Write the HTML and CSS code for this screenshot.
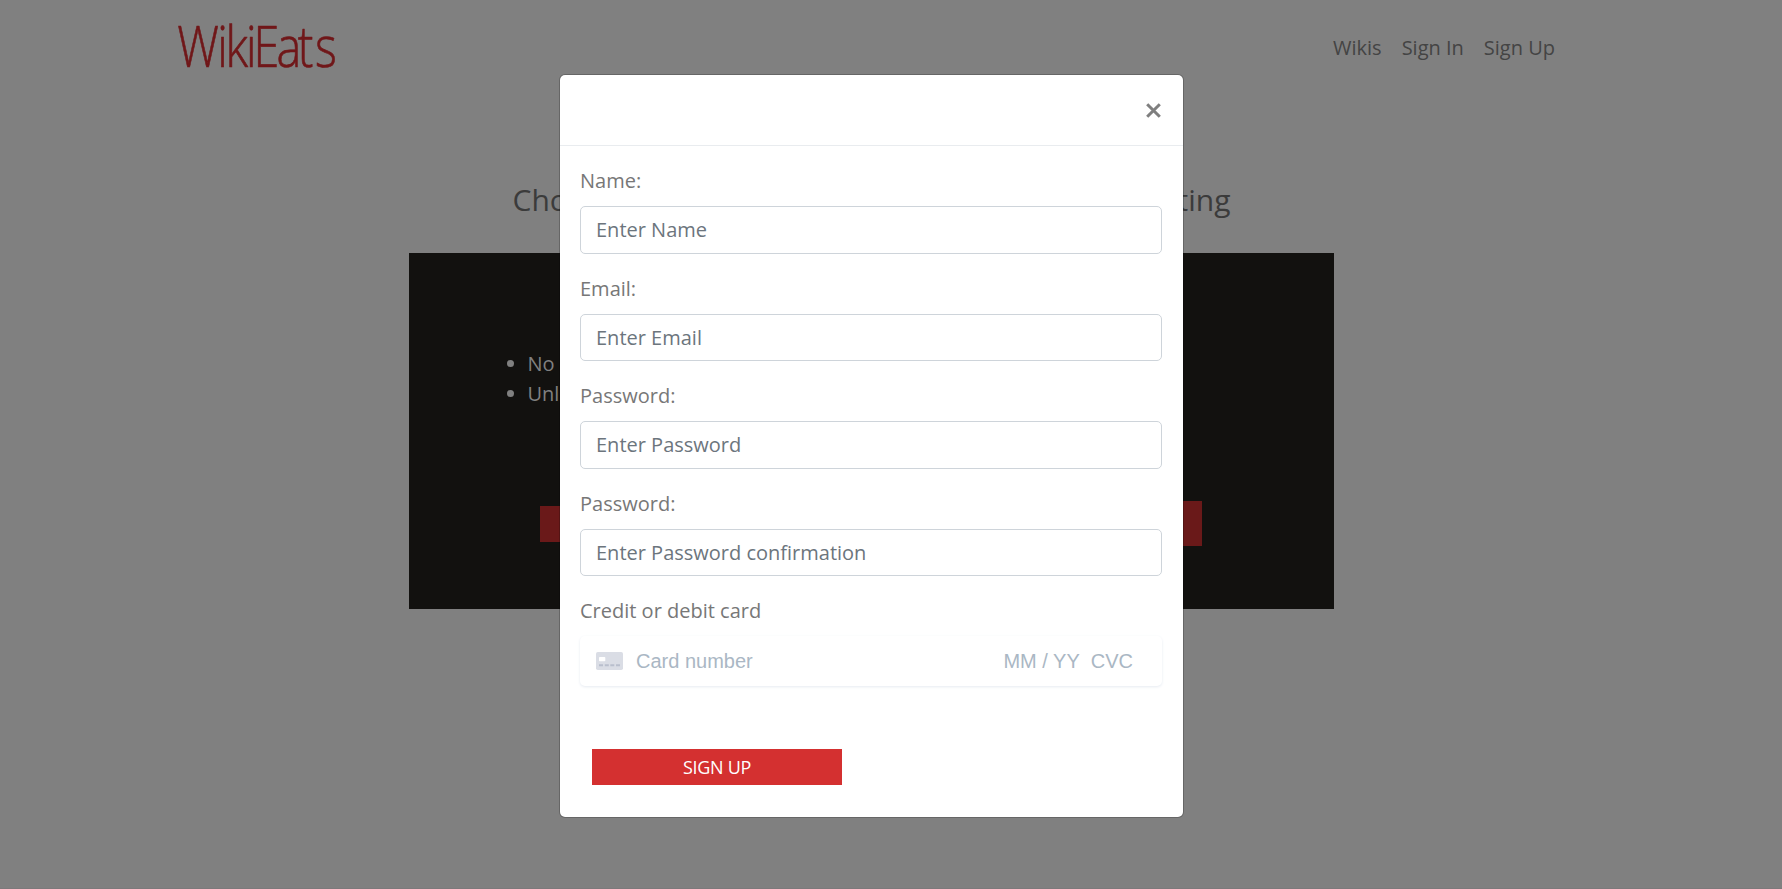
FILE: index.html
```
<!DOCTYPE html>
<html lang="en">
<head>
<meta charset="utf-8">
<title>WikiEats</title>
<link rel="stylesheet" href="styles.css">
</head>
<body>
<div class="page">
  <header class="navbar">
    <svg class="logo" width="170" height="80" viewBox="0 -14 170 80" role="img" aria-label="WikiEats">
      <text class="logo-text" transform="scale(.82 1)" x="-1 48 58 83 92 120 146 167" y="47">WikiEats</text>
    </svg>
    <nav class="nav">
      <a class="nav-link">Wikis</a>
      <a class="nav-link">Sign In</a>
      <a class="nav-link">Sign Up</a>
    </nav>
  </header>
  <h2 class="headline"><span>Cho</span><span>ting</span></h2>
  <section class="plans">
    <ul class="features">
      <li>No</li>
      <li>Unl</li>
    </ul>
    <div class="plan-actions">
      <div class="plan-button"></div>
      <div class="plan-button plan-button-tall"></div>
    </div>
  </section>
</div>
<div class="backdrop">
  <div class="modal">
    <div class="modal-header">
      <svg class="close" width="15" height="15" viewBox="0 0 15 15"><path d="M1.2 1.2 13.8 13.8M13.8 1.2 1.2 13.8"/></svg>
    </div>
    <form class="modal-body">
      <div class="group"><label class="label">Name:</label><div class="field">Enter Name</div></div>
      <div class="group"><label class="label">Email:</label><div class="field">Enter Email</div></div>
      <div class="group"><label class="label">Password:</label><div class="field">Enter Password</div></div>
      <div class="group"><label class="label">Password:</label><div class="field">Enter Password confirmation</div></div>
      <label class="label">Credit or debit card</label>
      <div class="card">
        <svg class="card-icon" width="27" height="18" viewBox="0 0 27 18">
          <rect width="27" height="18" rx="1.8" fill="#dadde5"/>
          <rect x="3" y="5" width="6.3" height="4.3" rx=".8" fill="#fff"/>
          <path d="M3 13.2h4M8.8 13.2h4M14.3 13.2h4M20 13.2h4" stroke="#b9bfcd" stroke-width="1.9"/>
        </svg>
        <span class="card-number">Card number</span>
        <span class="card-expiry">MM / YY</span>
        <span>CVC</span>
      </div>
      <div class="submit">SIGN UP</div>
    </form>
  </div>
</div>
</body>
</html>
```
FILE: styles.css
```
* { box-sizing: border-box; }
body {
  margin: 0;
  height: 889px;
  overflow: hidden;
  background: #808080;
  font: 20px/30px "Open Sans", sans-serif;
  color: #3b3b3b;
}
.page { width: 1743px; }
.navbar {
  display: flex;
  justify-content: space-between;
  align-items: flex-start;
  height: 180px;
  padding: 6px 188px 0 178px;
}
.logo { display: block; overflow: visible; }
.logo-text {
  font: 300 57px "Open Sans", sans-serif;
  fill: #701719;
  stroke: #701719;
  stroke-width: .7;
  stroke-linejoin: round;
}
.nav { display: flex; gap: 20px; padding-top: 27px; }
.nav-link { color: #444; }
.headline {
  display: flex;
  justify-content: space-between;
  width: 718px;
  margin: 0 auto;
  font-size: 30px;
  font-weight: 400;
  line-height: 40px;
}
.plans {
  width: 925px;
  height: 356px;
  margin: 33px auto 0;
  padding-top: 96px;
  background: #12110f;
}
.features { margin: 0; padding-left: 118.5px; color: #808080; height: 152px; }
.plan-actions {
  display: flex;
  justify-content: space-between;
  align-items: center;
  height: 45px;
  padding: 0 132px 0 131px;
}
.plan-button { width: 250px; height: 36px; background: #6a1919; }
.plan-button-tall { height: 45px; }
.backdrop {
  position: absolute;
  inset: 0;
  padding: 74px 0 0 559px;
  border-bottom: 1px solid #7d797b;
}
.modal {
  width: 625px;
  height: 744px;
  border: 1px solid rgba(0, 0, 0, .2);
  border-radius: 6px;
  background: #fff;
  background-clip: padding-box;
  color: #777;
}
.modal-header {
  display: flex;
  justify-content: flex-end;
  height: 71px;
  padding: 28px 22px 0 0;
  border-bottom: 1px solid #e9ecef;
}
.close { fill: none; stroke: #7f7f7f; stroke-width: 3; }
.modal-body { padding: 20px 21px 20px 20px; }
.group { height: 107.5px; }
.label { display: block; margin-bottom: 10px; }
.field {
  height: 47.5px;
  padding: 8px 15px;
  border: 1px solid #ced4da;
  border-radius: 5px;
  color: #6c757d;
}
.card {
  display: flex;
  align-items: center;
  height: 50px;
  padding: 0 29px 0 16px;
  border-radius: 5px;
  box-shadow: 0 1px 3px #e6ebf1;
  font: 20px/24px "Liberation Sans", Arial, sans-serif;
  color: #aab7c4;
}
.card-number { flex: 1; padding-left: 13px; }
.card-expiry { margin-right: 11px; }
.submit {
  width: 250px;
  height: 36px;
  margin: 63px 0 0 12px;
  background: #d43030;
  color: #fff;
  font-size: 18px;
  font-weight: 500;
  letter-spacing: -.3px;
  line-height: 37px;
  text-align: center;
}
```
